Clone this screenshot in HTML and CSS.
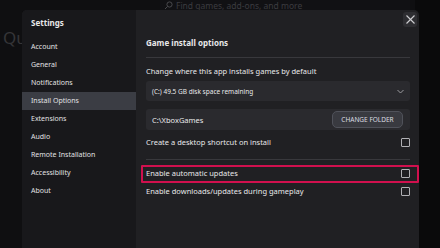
FILE: index.html
```html
<!DOCTYPE html>
<html lang="en">
<head>
    <meta charset="UTF-8">
    <title>Settings - Install Options</title>
    <link rel="stylesheet" href="styles.css">
</head>
<body>

    <!-- APP BEHIND THE DIALOG -->
    <div class="app">
        <div class="topbar">
            <div class="search">
                <svg class="search-icon" width="9" height="9" viewBox="0 0 9 9">
                    <circle cx="5.5" cy="3.5" r="2.6" fill="none" stroke="#4a4a4e" stroke-width="1"/>
                    <line x1="3.6" y1="5.4" x2="1" y2="8" stroke="#4a4a4e" stroke-width="1"/>
                </svg>
                <span>Find games, add-ons, and more</span>
            </div>
        </div>
        <h2 class="page-title">Qu</h2>
    </div>

    <!-- SETTINGS DIALOG -->
    <div class="dialog">
        <nav class="sidebar">
            <h1>Settings</h1>
            <a class="nav-item">Account</a>
            <a class="nav-item">General</a>
            <a class="nav-item">Notifications</a>
            <a class="nav-item active">Install Options</a>
            <a class="nav-item">Extensions</a>
            <a class="nav-item">Audio</a>
            <a class="nav-item">Remote Installation</a>
            <a class="nav-item">Accessibility</a>
            <a class="nav-item">About</a>
        </nav>

        <section class="content">
            <h3 class="section-title">Game install options</h3>

            <p class="label">Change where this app installs games by default</p>
            <div class="select">
                <span>(C:) 49.5 GB disk space remaining</span>
                <svg width="7" height="5" viewBox="0 0 7 5">
                    <polyline points="0.5,1 3.5,4 6.5,1" fill="none" stroke="#9a9a9e" stroke-width="1"/>
                </svg>
            </div>

            <div class="folder">
                <span>C:\XboxGames</span>
                <button class="folder-btn">CHANGE FOLDER</button>
            </div>

            <div class="row">
                <span>Create a desktop shortcut on install</span>
                <span class="check"></span>
            </div>

            <div class="rows">
                <div class="row marked">
                    <span>Enable automatic updates</span>
                    <span class="check"></span>
                </div>
                <div class="row">
                    <span>Enable downloads/updates during gameplay</span>
                    <span class="check"></span>
                </div>
            </div>
        </section>

        <button class="close">
            <svg width="9" height="9" viewBox="0 0 9 9">
                <line x1="0.5" y1="0.5" x2="8.5" y2="8.5" stroke="#d0d0d4" stroke-width="1.1"/>
                <line x1="8.5" y1="0.5" x2="0.5" y2="8.5" stroke="#d0d0d4" stroke-width="1.1"/>
            </svg>
        </button>
    </div>

</body>
</html>
```
FILE: styles.css
```css
* { margin: 0; padding: 0; box-sizing: border-box; }
body {
    background-color: #0a0a0b;
    color: #e8e8ea;
    font-family: 'Noto Sans', 'Open Sans', sans-serif;
    width: 440px;
    height: 248px;
    overflow: hidden;
    position: relative;
}

/* Background app */
.app {
    width: 415px;
    height: 248px;
    background: #0f0f11;
}

.topbar {
    height: 10px;
    display: flex;
    justify-content: flex-end;
    padding-right: 5px;
    overflow: hidden;
}

.search {
    width: 250px;
    height: 10px;
    display: flex;
    align-items: center;
    gap: 3px;
    padding-left: 4px;
    background: #111114;
    color: #3c3c40;
    font-size: 8.5px;
    white-space: nowrap;
}

.page-title {
    margin: 18px 0 0 3px;
    font-size: 17px;
    font-weight: 400;
    color: #353538;
    line-height: 20px;
}

/* Dialog */
.dialog {
    position: absolute;
    left: 22px;
    top: 10px;
    width: 397px;
    height: 250px;
    display: flex;
    border-radius: 5px;
    overflow: hidden;
    background: #202023;
}

.sidebar {
    width: 114px;
    background: #18181b;
    display: flex;
    flex-direction: column;
    padding-top: 7px;
}

.sidebar h1 {
    font-size: 8px;
    font-weight: bold;
    line-height: 12px;
    padding-left: 9px;
    margin-bottom: 9px;
}

.nav-item {
    height: 18px;
    line-height: 18px;
    padding-left: 9px;
    font-size: 7px;
    color: #e2e2e4;
}

.nav-item.active {
    background: #3b3d44;
}

.content {
    flex: 1;
    padding: 27px 9px 0 10px;
    font-size: 7.5px;
}

.section-title {
    font-size: 8px;
    font-weight: bold;
    line-height: 12px;
    padding-bottom: 8px;
    border-bottom: 1px solid #38383c;
}

.label {
    line-height: 12px;
    margin-top: 7px;
}

.select {
    height: 20px;
    margin-top: 4px;
    padding: 0 6px;
    display: flex;
    align-items: center;
    justify-content: space-between;
    background: #2a2a2e;
    border-radius: 3px;
    font-size: 6.5px;
}

.folder {
    height: 21px;
    margin-top: 8px;
    padding: 0 7px 0 6px;
    display: flex;
    align-items: center;
    justify-content: space-between;
    background: #2a2a2e;
    border-radius: 3px;
}

.folder-btn {
    width: 71px;
    height: 17px;
    background: #393a40;
    border: 1px solid #50525a;
    border-radius: 5px;
    color: #dcdce0;
    font-family: inherit;
    font-size: 6.5px;
}

.row {
    height: 18px;
    display: flex;
    align-items: center;
    justify-content: space-between;
    margin-top: 3px;
    position: relative;
}

.rows {
    margin-top: 8px;
    padding-top: 4px;
    border-top: 1px solid #38383c;
}

.rows .row { margin-top: 0; }

.check {
    width: 9px;
    height: 9px;
    border: 1px solid #b0b0b4;
    border-radius: 1px;
}

/* annotation box round the row */
.marked::after {
    content: "";
    position: absolute;
    left: -5px;
    right: -9px;
    top: 1px;
    bottom: -1px;
    border: 2px solid #d0104e;
    border-radius: 1px;
}

.close {
    position: absolute;
    top: 2px;
    right: 2px;
    width: 14px;
    height: 15px;
    border: none;
    border-radius: 3px;
    background: #2e2e32;
    display: flex;
    align-items: center;
    justify-content: center;
}
```
